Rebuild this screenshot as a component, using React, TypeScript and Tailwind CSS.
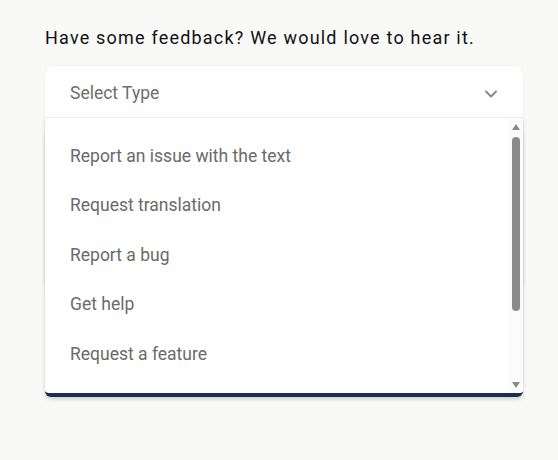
import { ChevronDown } from "lucide-react";

const options = [
  "Report an issue with the text",
  "Request translation",
  "Report a bug",
  "Get help",
  "Request a feature",
];

export default function App() {
  return (
    <div className="min-h-screen w-full bg-[#f9f9f7] font-['Roboto',sans-serif]">
      <div className="px-[45px] pt-[26px]">
        <p className="text-[18px] leading-[24px] tracking-[1.2px] text-[#111]">
          Have some feedback? We would love to hear it.
        </p>

        <div className="relative mt-[16px] w-[478px]">
          {/* select trigger */}
          <div className="flex h-[52px] items-center justify-between rounded-t-lg border-b border-[#efefef] bg-white pt-[4px] pl-[25px] pr-[22px] shadow-[0_0_3px_rgba(0,0,0,0.08)]">
            <span className="text-[17.5px] text-[#6e6e6e]">Select Type</span>
            <ChevronDown className="h-[20px] w-[20px] text-[#8a8a8a]" strokeWidth={2.4} />
          </div>

          {/* field underneath the menu */}
          <div className="mt-[12px] h-[160px] rounded-md bg-white shadow-[0_1px_3px_rgba(0,0,0,0.15)]" />

          {/* open menu */}
          <div className="absolute left-0 right-0 top-[52px] flex h-[279px] overflow-hidden rounded-b-md border-b-[4px] border-[#172e55] bg-white shadow-[0_2px_4px_rgba(0,0,0,0.18)]">
            <ul className="flex-1 pt-[13px]">
              {options.map((o) => (
                <li
                  key={o}
                  className="flex h-[49.5px] items-center pl-[25px] text-[17.5px] text-[#6a6a6a]"
                >
                  {o}
                </li>
              ))}
            </ul>
            <div className="flex w-[14px] flex-col items-center bg-[#fbfbfb] pt-[6px]">
              <div className="h-0 w-0 border-x-[4px] border-b-[6px] border-x-transparent border-b-[#8a8a8a]" />
              <div className="mt-[7px] h-[174px] w-[8px] rounded-full bg-[#8a8a8a]" />
              <div className="mt-auto mb-[5px] h-0 w-0 border-x-[4px] border-t-[6px] border-x-transparent border-t-[#8a8a8a]" />
            </div>
          </div>
        </div>
      </div>
    </div>
  );
}
